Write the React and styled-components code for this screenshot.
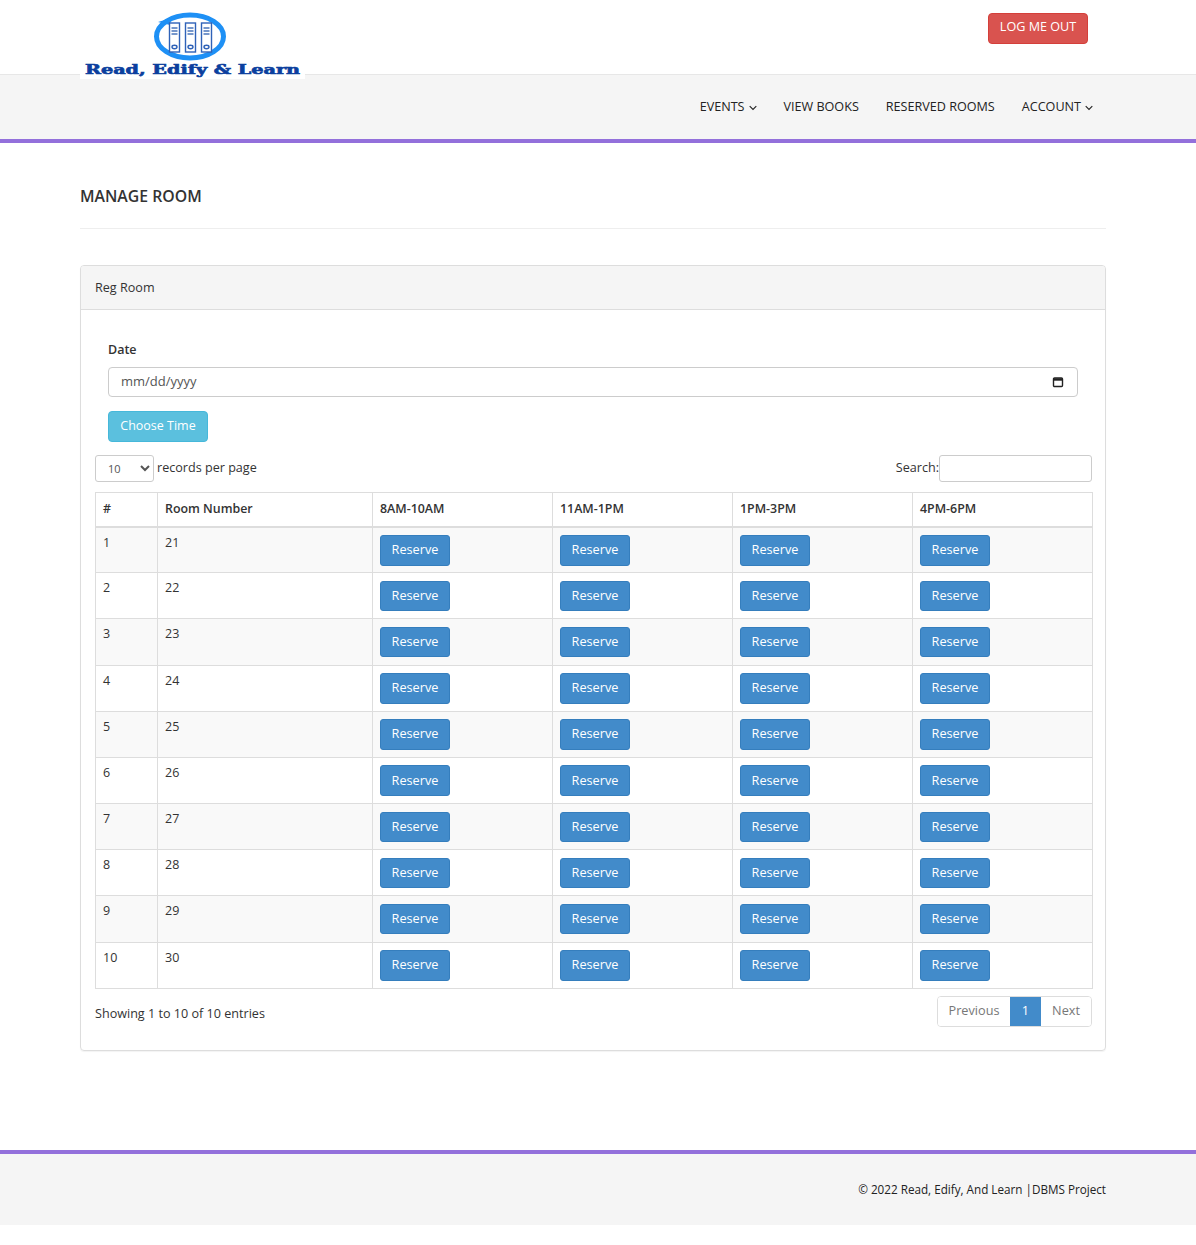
import styled, { createGlobalStyle } from "styled-components";

const GlobalStyle = createGlobalStyle`
  html, body {
    margin: 0;
    padding: 0;
    background: #fff;
  }
  body {
    font-family: "Open Sans", sans-serif;
    font-size: 13px;
    line-height: 18px;
    color: #333;
  }
`;

const Page = styled.div`
  width: 1196px;
  height: 1245px;
  overflow: hidden;
`;

// Header
const TopBar = styled.header`
  height: 74px;
  padding: 0 108px 0 80px;
  display: flex;
  justify-content: space-between;
  align-items: flex-start;
  border-bottom: 1px solid #e7e7e7;
  position: relative;
  z-index: 2;
`;

const LogoBox = styled.div`
  width: 225px;
  height: 71px;
  margin-top: 8px;
  background: #fff;
`;

const LogoutButton = styled.button`
  margin-top: 13px;
  width: 100px;
  height: 31px;
  padding: 0 0 4px;
  background: #d9534f;
  border: 1px solid #d43f3a;
  border-radius: 4px;
  color: #fff;
  font: 12.6px "Open Sans", sans-serif;
`;

const NavBar = styled.nav`
  height: 64px;
  padding-right: 103px;
  background: #f5f5f5;
  border-bottom: 4px solid #9370db;
  display: flex;
  justify-content: flex-end;
  align-items: center;
  gap: 27px;
`;

const NavItem = styled.a`
  display: flex;
  align-items: center;
  gap: 4px;
  font-size: 12.6px;
  color: #222;
  svg {
    margin-top: 1px;
  }
`;

const Chevron = () => (
  <svg width="8" height="6" viewBox="0 0 8 6" fill="none" stroke="#222" strokeWidth="1.1">
    <path d="M0.7 1.2 L4 4.5 L7.3 1.2" />
  </svg>
);

// Content
const Main = styled.main`
  width: 1026px;
  margin: 0 0 0 80px;
`;

const TitleRow = styled.div`
  height: 86px;
  display: flex;
  align-items: flex-end;
  padding-bottom: 21px;
  box-sizing: border-box;
  border-bottom: 1px solid #eee;
  margin-bottom: 36px;
`;

const Title = styled.h1`
  margin: 0;
  font-size: 15.8px;
  line-height: 22px;
  font-weight: 600;
  color: #333;
`;

const Panel = styled.section`
  border: 1px solid #ddd;
  border-radius: 4px;
  box-shadow: 0 1px 1px rgba(0, 0, 0, 0.05);
  height: 786px;
  box-sizing: border-box;
`;

const PanelHeading = styled.div`
  height: 44px;
  box-sizing: border-box;
  padding: 13px 14px 0;
  background: #f5f5f5;
  border-bottom: 1px solid #ddd;
  border-radius: 3px 3px 0 0;
  font-size: 12.6px;
`;

const PanelBody = styled.div`
  padding: 31px 13px 0 14px;
`;

const DateForm = styled.div`
  padding: 0 14px 0 13px;
`;

const Label = styled.label`
  display: block;
  font-weight: 600;
  font-size: 12.5px;
  margin-bottom: 8px;
`;

const DateField = styled.div`
  height: 30px;
  box-sizing: border-box;
  border: 1px solid #ccc;
  border-radius: 4px;
  padding: 0 12px 2px;
  display: flex;
  justify-content: space-between;
  align-items: center;
  color: #555;
  svg {
    margin-top: 2px;
  }
`;

const InfoButton = styled.button`
  display: block;
  margin: 14px 0 13px;
  width: 100px;
  height: 31px;
  padding: 0 0 2px;
  background: #5bc0de;
  border: 1px solid #46b8da;
  border-radius: 4px;
  color: #fff;
  font: 12.5px "Open Sans", sans-serif;
`;

const TableControls = styled.div`
  height: 27px;
  display: flex;
  justify-content: space-between;
  align-items: center;
  margin-bottom: 10px;
`;

const ControlGroup = styled.div`
  display: flex;
  align-items: center;
  gap: ${(props) => props.$gap}px;
  font-size: 12.6px;
`;

const ControlText = styled.span`
  padding-bottom: 2px;
`;

const LengthSelect = styled.select`
  width: 59px;
  height: 27px;
  padding: 0 0 0 8px;
  border: 1px solid #ccc;
  border-radius: 3px;
  background: #fff;
  color: #555;
  font: 11px "Open Sans", sans-serif;
`;

const SearchInput = styled.input`
  width: 153px;
  height: 27px;
  box-sizing: border-box;
  border: 1px solid #ccc;
  border-radius: 3px;
  padding: 0 8px;
  background: #fff;
`;

const RoomTable = styled.table`
  width: 997px;
  table-layout: fixed;
  border-collapse: collapse;
  border: 1px solid #ddd;
`;

const HeadCell = styled.th`
  height: 34px;
  padding: 0 7px 1px;
  box-sizing: border-box;
  border: 1px solid #ddd;
  border-bottom: 2px solid #ddd;
  text-align: left;
  font-size: 12.4px;
  font-weight: 600;
`;

const BodyRow = styled.tr`
  height: 46.18px;
  background: ${(props) => (props.$striped ? "#f9f9f9" : "#fff")};
`;

const BodyCell = styled.td`
  padding: 6px 7px 6px;
  border: 1px solid #ddd;
  vertical-align: top;
  font-size: 12.5px;
  line-height: 18px;
`;

const ReserveButton = styled.button`
  display: block;
  width: 70px;
  height: 30.6px;
  margin-top: 1.5px;
  padding: 0 0 2px;
  background: #428bca;
  border: 1px solid #357ebd;
  border-radius: 3px;
  color: #fff;
  font: 12.7px "Open Sans", sans-serif;
`;

const TableFooter = styled.div`
  display: flex;
  justify-content: space-between;
  align-items: flex-start;
  padding: 7px 0 0;
`;

const EntryCount = styled.div`
  padding-top: 9px;
  font-size: 12.6px;
`;

const Pagination = styled.div`
  display: flex;
  height: 31px;
  border: 1px solid #ddd;
  border-radius: 4px;
  box-sizing: border-box;
  overflow: hidden;
  font-size: 12.7px;
`;

const PageLink = styled.a`
  display: flex;
  align-items: center;
  justify-content: center;
  padding-bottom: 2px;
  width: ${(props) => props.$width}px;
  color: ${(props) => (props.$active ? "#fff" : "#777")};
  background: ${(props) => (props.$active ? "#428bca" : "#fff")};
`;

const Footer = styled.footer`
  margin-top: 99px;
  height: 69px;
  box-sizing: content-box;
  border-top: 4px solid #9370db;
  background: #f5f5f5;
  padding: 0 90px 2px 0;
  display: flex;
  justify-content: flex-end;
  align-items: center;
  font-size: 11.7px;
  color: #222;
`;

const Logo = () => (
  <svg width="225" height="71" viewBox="0 0 225 71">
    <ellipse cx="110" cy="28.5" rx="33.5" ry="21.5" fill="none" stroke="#1e90f5" strokeWidth="5" />
    <path d="M78 14 L91 10 L90 17 Z" fill="#1e90f5" />
    {[89.5, 105.5, 121.5].map((x) => (
      <g key={x} fill="#fff" stroke="#2f62b8" strokeWidth="1.4">
        <rect x={x} y="15" width="10" height="29" />
        <path d={`M${x + 2} 20 h6 M${x + 2} 23 h6 M${x + 2} 26 h6`} stroke="#4a76bc" />
        <ellipse cx={x + 5} cy="39" rx="2.5" ry="1.7" />
      </g>
    ))}
    <text
      x="5"
      y="66"
      textLength="215"
      lengthAdjust="spacingAndGlyphs"
      fontFamily="'DejaVu Serif', serif"
      fontWeight="700"
      fontSize="12"
      fill="#0b3f9e"
      stroke="#0b3f9e"
      strokeWidth="0.6"
    >
      Read, Edify &amp; Learn
    </text>
  </svg>
);

const rooms = Array.from({ length: 10 }, (_, i) => ({ id: i + 1, number: 21 + i }));
const slots = ["8AM-10AM", "11AM-1PM", "1PM-3PM", "4PM-6PM"];

export default function App() {
  return (
    <Page>
      <GlobalStyle />
      <TopBar>
        <LogoBox>
          <Logo />
        </LogoBox>
        <LogoutButton>LOG ME OUT</LogoutButton>
      </TopBar>
      <NavBar>
        <NavItem>
          EVENTS <Chevron />
        </NavItem>
        <NavItem>VIEW BOOKS</NavItem>
        <NavItem>RESERVED ROOMS</NavItem>
        <NavItem>
          ACCOUNT <Chevron />
        </NavItem>
      </NavBar>

      <Main>
        <TitleRow>
          <Title>MANAGE ROOM</Title>
        </TitleRow>

        <Panel>
          <PanelHeading>Reg Room</PanelHeading>
          <PanelBody>
            <DateForm>
              <Label>Date</Label>
              <DateField>
                mm/dd/yyyy
                <svg width="14" height="14" viewBox="0 0 14 14" fill="none" stroke="#222">
                  <rect x="2.5" y="3" width="9" height="8.5" rx="1" strokeWidth="1.4" />
                  <path d="M2.5 4.5 h9" strokeWidth="2.4" />
                </svg>
              </DateField>
              <InfoButton>Choose Time</InfoButton>
            </DateForm>

            <TableControls>
              <ControlGroup $gap={3}>
                <LengthSelect defaultValue="10">
                  <option value="10">10</option>
                  <option value="25">25</option>
                </LengthSelect>
                <ControlText>records per page</ControlText>
              </ControlGroup>
              <ControlGroup $gap={0}>
                <ControlText>Search:</ControlText>
                <SearchInput />
              </ControlGroup>
            </TableControls>

            <RoomTable>
              <colgroup>
                <col style={{ width: 62 }} />
                <col style={{ width: 215 }} />
                <col style={{ width: 180 }} />
                <col style={{ width: 180 }} />
                <col style={{ width: 180 }} />
                <col style={{ width: 180 }} />
              </colgroup>
              <thead>
                <tr>
                  <HeadCell>#</HeadCell>
                  <HeadCell>Room Number</HeadCell>
                  {slots.map((slot) => (
                    <HeadCell key={slot}>{slot}</HeadCell>
                  ))}
                </tr>
              </thead>
              <tbody>
                {rooms.map((room) => (
                  <BodyRow key={room.id} $striped={room.id % 2 === 1}>
                    <BodyCell>{room.id}</BodyCell>
                    <BodyCell>{room.number}</BodyCell>
                    {slots.map((slot) => (
                      <BodyCell key={slot}>
                        <ReserveButton>Reserve</ReserveButton>
                      </BodyCell>
                    ))}
                  </BodyRow>
                ))}
              </tbody>
            </RoomTable>

            <TableFooter>
              <EntryCount>Showing 1 to 10 of 10 entries</EntryCount>
              <Pagination>
                <PageLink $width={72}>Previous</PageLink>
                <PageLink $width={31} $active>1</PageLink>
                <PageLink $width={50}>Next</PageLink>
              </Pagination>
            </TableFooter>
          </PanelBody>
        </Panel>
      </Main>

      <Footer>© 2022 Read, Edify, And Learn |DBMS Project</Footer>
    </Page>
  );
}
